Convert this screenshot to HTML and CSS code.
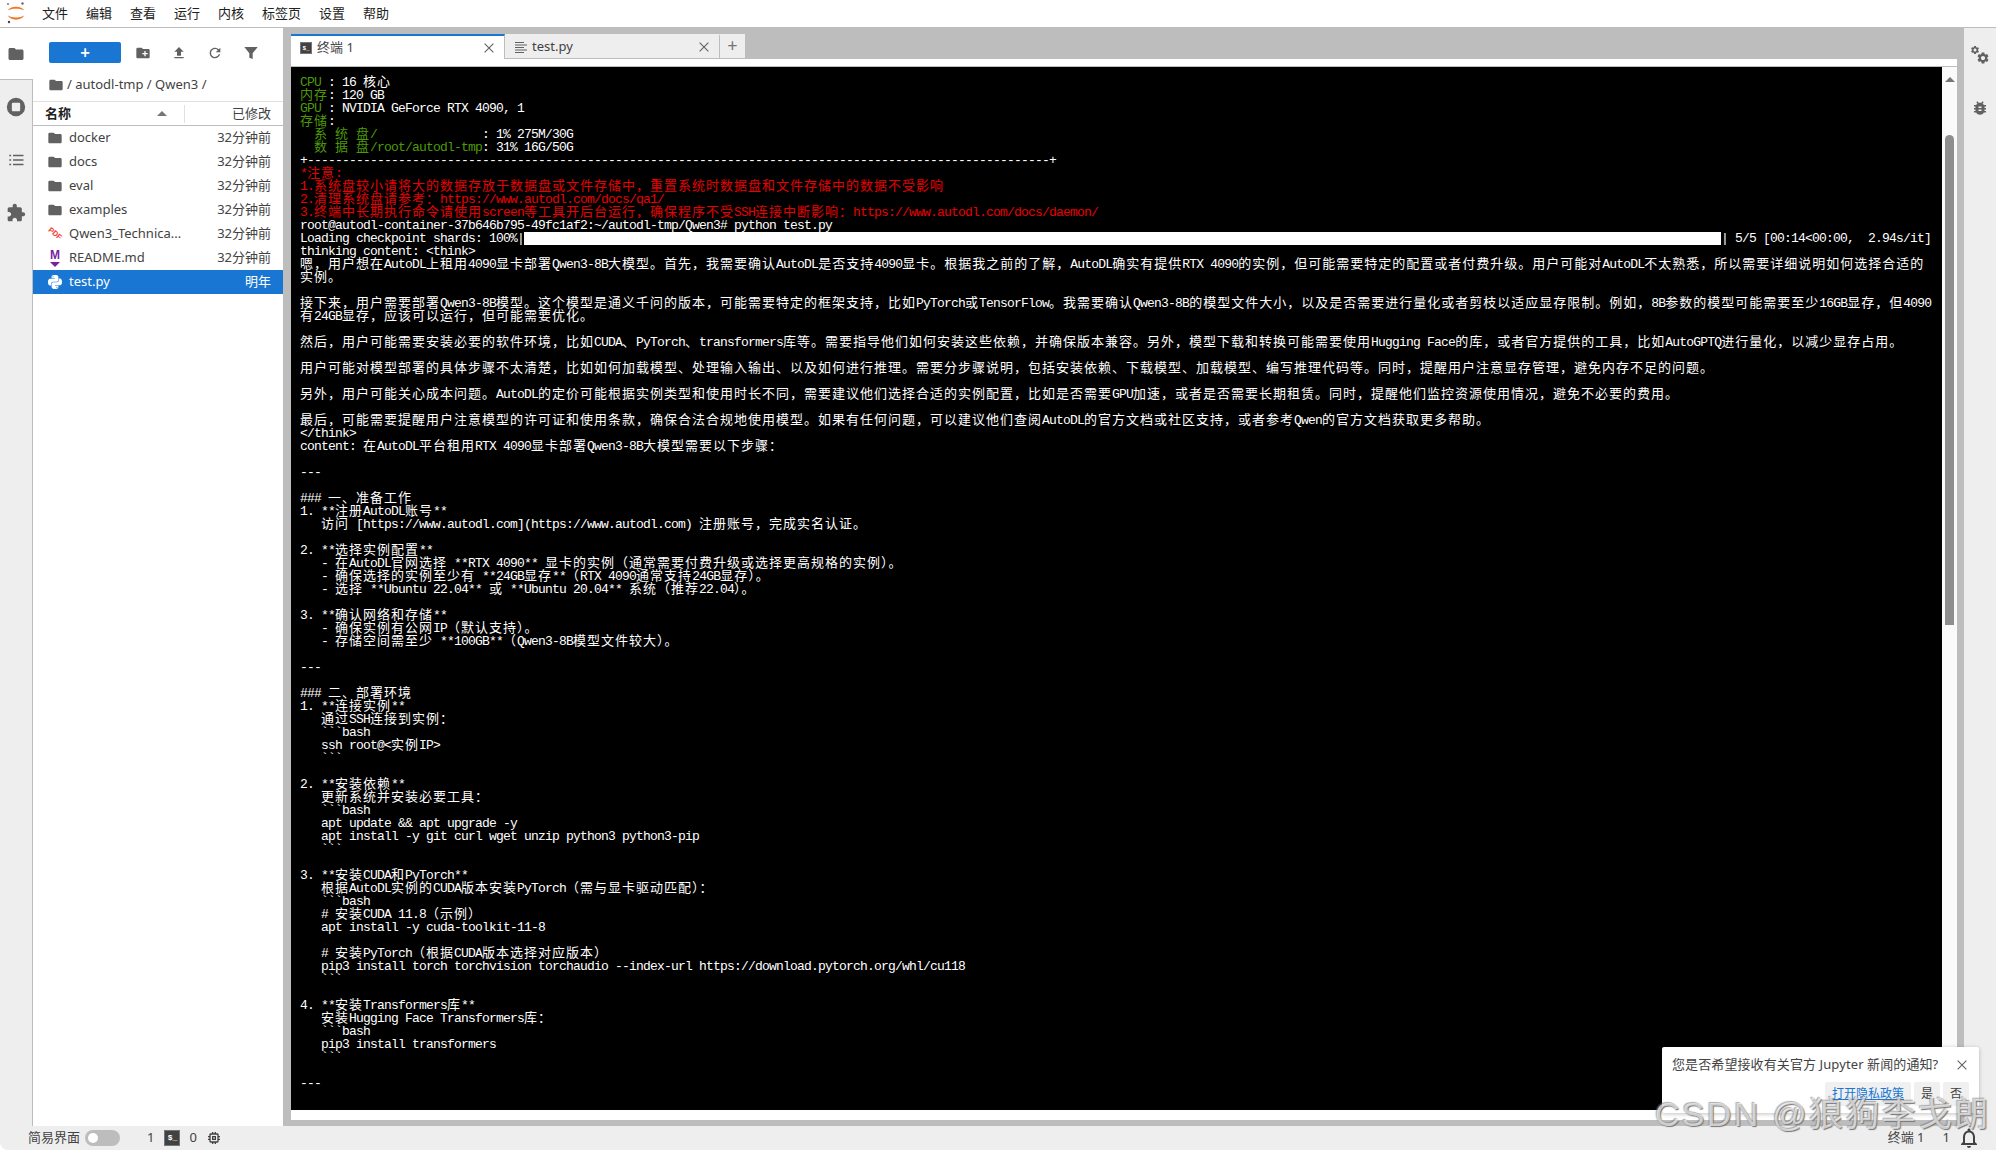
FILE: index.html
```html
<!DOCTYPE html>
<html lang="zh">
<head>
<meta charset="utf-8">
<title>JupyterLab</title>
<link rel="stylesheet" href="styles.css">
</head>
<body>
<svg class="defs" width="0" height="0" aria-hidden="true">
  <symbol id="i-folder" viewBox="0 0 24 24"><path d="M10 4H4c-1.1 0-2 .9-2 2v12c0 1.1.9 2 2 2h16c1.1 0 2-.9 2-2V8c0-1.1-.9-2-2-2h-8l-2-2z"/></symbol>
  <symbol id="i-cog" viewBox="0 0 24 24"><path d="M19.14 12.94c.04-.3.06-.61.06-.94 0-.32-.02-.64-.07-.94l2.03-1.58a.49.49 0 00.12-.61l-1.92-3.32a.488.488 0 00-.59-.22l-2.39.96c-.5-.38-1.03-.7-1.62-.94l-.36-2.54a.484.484 0 00-.48-.41h-3.84c-.24 0-.43.17-.47.41l-.36 2.54c-.59.24-1.13.57-1.62.94l-2.39-.96c-.22-.08-.47 0-.59.22L2.74 8.87c-.12.21-.08.47.12.61l2.03 1.58c-.05.3-.09.63-.09.94s.02.64.07.94l-2.03 1.58a.49.49 0 00-.12.61l1.92 3.32c.12.22.37.29.59.22l2.39-.96c.5.38 1.03.7 1.62.94l.36 2.54c.05.24.24.41.48.41h3.84c.24 0 .44-.17.47-.41l.36-2.54c.59-.24 1.13-.56 1.62-.94l2.39.96c.22.08.47 0 .59-.22l1.92-3.32c.12-.22.07-.47-.12-.61l-2.01-1.58zM12 15.6c-1.98 0-3.6-1.62-3.6-3.6s1.62-3.6 3.6-3.6 3.6 1.62 3.6 3.6-1.62 3.6-3.6 3.6z"/></symbol>
  <symbol id="i-close" viewBox="0 0 16 16"><path d="M3 3l10 10M13 3L3 13" fill="none" stroke="currentColor" stroke-width="1.3"/></symbol>
</svg>

<header class="menubar">
  <svg class="logo" viewBox="0 0 24 27" width="24" height="27">
    <path d="M4 10.5C6 5.5 18 5.5 20 10.5C17 8 7 8 4 10.5z" fill="#f37726"/>
    <path d="M4 15.5C6 21 18 21 20 15.5C17 18 7 18 4 15.5z" fill="#f37726"/>
    <circle cx="18.5" cy="3.5" r="1.2" fill="#666"/><circle cx="4" cy="4" r="1" fill="#777"/><circle cx="5" cy="22" r="1.2" fill="#444"/>
  </svg>
  <nav class="menu"><span>文件</span><span>编辑</span><span>查看</span><span>运行</span><span>内核</span><span>标签页</span><span>设置</span><span>帮助</span></nav>
</header>

<main class="workspace">
  <aside class="sidebar">
    <div class="side-tab active"><svg class="ic-18 grey"><use href="#i-folder"/></svg></div>
    <div class="side-tab"><svg class="ic-20 grey" viewBox="0 0 24 24"><path fill-rule="evenodd" d="M12 1a11 11 0 100 22 11 11 0 000-22zM8.5 7h7c.8 0 1.5.7 1.5 1.5v7c0 .8-.7 1.5-1.5 1.5h-7c-.8 0-1.5-.7-1.5-1.5v-7C7 7.700 7.700 7 8.500 7z"/></svg></div>
    <div class="side-tab"><svg class="ic-18 grey" viewBox="0 0 24 24"><path d="M3 5h2.500v2H3zM8 5h14v2H8zM3 11h2.500v2H3zM8 11h14v2H8zM3 17h2.500v2H3zM8 17h14v2H8z"/></svg></div>
    <div class="side-tab"><svg class="ic-20 grey" viewBox="0 0 24 24"><path d="M20.500 11H19V7c0-1.100-.9-2-2-2h-4V3.500C13 2.120 11.880 1 10.500 1S8 2.120 8 3.500V5H4c-1.100 0-1.990.9-1.990 2v3.800H3.500c1.490 0 2.700 1.210 2.700 2.700s-1.210 2.700-2.700 2.700H2V20c0 1.100.9 2 2 2h3.800v-1.500c0-1.490 1.210-2.700 2.700-2.700 1.490 0 2.700 1.210 2.700 2.700V22H17c1.100 0 2-.9 2-2v-4h1.500c1.380 0 2.500-1.120 2.500-2.500S21.880 11 20.500 11z"/></svg></div>
  </aside>

  <section class="files">
    <div class="file-tools">
      <button class="new-btn">+</button>
      <span class="tool"><svg class="ic-16 grey" viewBox="0 0 24 24"><path fill-rule="evenodd" d="M20 6h-8l-2-2H4c-1.100 0-2 .9-2 2v12c0 1.100.9 2 2 2h16c1.100 0 2-.9 2-2V8c0-1.100-.9-2-2-2zm-1 8h-3v3h-2v-3h-3v-2h3V9h2v3h3v2z"/></svg></span>
      <span class="tool"><svg class="ic-16 grey" viewBox="0 0 24 24"><path d="M9 16h6v-6h4l-7-7-7 7h4zm-4 2h14v2H5z"/></svg></span>
      <span class="tool"><svg class="ic-16 grey" viewBox="0 0 24 24"><path d="M17.650 6.350A7.958 7.958 0 0012 4c-4.420 0-7.990 3.580-7.990 8s3.570 8 7.990 8c3.730 0 6.840-2.550 7.730-6h-2.080A5.990 5.990 0 0112 18c-3.310 0-6-2.690-6-6s2.690-6 6-6c1.660 0 3.140.69 4.220 1.780L13 11h7V4l-2.350 2.350z"/></svg></span>
      <span class="tool"><svg class="ic-16 grey" viewBox="0 0 24 24"><path d="M2 3h20l-7.500 9.500V21l-5-2v-6.500z"/></svg></span>
    </div>
    <div class="crumbs"><svg class="ic-16 grey"><use href="#i-folder"/></svg><span>/ autodl-tmp / Qwen3 /</span></div>
    <div class="file-head">
      <b class="head-name">名称</b><i class="sort-arrow"></i><span class="head-mod">已修改</span>
    </div>
    <div class="file-row"><svg class="ic-16 grey"><use href="#i-folder"/></svg><span class="fname">docker</span><span class="fmod">32分钟前</span></div>
    <div class="file-row"><svg class="ic-16 grey"><use href="#i-folder"/></svg><span class="fname">docs</span><span class="fmod">32分钟前</span></div>
    <div class="file-row"><svg class="ic-16 grey"><use href="#i-folder"/></svg><span class="fname">eval</span><span class="fmod">32分钟前</span></div>
    <div class="file-row"><svg class="ic-16 grey"><use href="#i-folder"/></svg><span class="fname">examples</span><span class="fmod">32分钟前</span></div>
    <div class="file-row"><span class="pdf-ic">PDF</span><span class="fname">Qwen3_Technica...</span><span class="fmod">32分钟前</span></div>
    <div class="file-row"><span class="md-ic">M</span><span class="fname">README.md</span><span class="fmod">32分钟前</span></div>
    <div class="file-row selected">
      <svg class="ic-16 white" viewBox="0 0 24 24"><path d="M11.900 1.500c-5.300 0-5 2.300-5 2.300v2.400H12v.8H4.900S1.500 6.600 1.500 12s3 5.200 3 5.200h1.800v-2.500s-.1-3 3-3h5s2.800 0 2.800-2.700V4.400s.4-2.900-5.200-2.900zM9.100 3.200a.9.9 0 110 1.800.9.9 0 010-1.800z"/><path transform="rotate(180 12 12)" d="M11.900 1.500c-5.300 0-5 2.300-5 2.300v2.400H12v.8H4.900S1.500 6.600 1.500 12s3 5.200 3 5.200h1.800v-2.500s-.1-3 3-3h5s2.800 0 2.800-2.700V4.400s.4-2.900-5.200-2.900zM9.100 3.200a.9.9 0 110 1.800.9.9 0 010-1.800z"/></svg>
      <span class="fname">test.py</span><span class="fmod">明年</span>
    </div>
  </section>

  <section class="dock">
    <div class="tabbar">
      <div class="tab current"><span class="term-ic small">$_</span><span class="tab-label">终端 1</span><svg class="ic-close"><use href="#i-close"/></svg></div>
      <div class="tab"><svg class="ic-12 grey" viewBox="0 0 12 12"><path d="M0 1h9v1H0zM0 3.500h12v1H0zM0 6h9v1H0zM0 8.500h12v1H0zM0 11h9v1H0z"/></svg><span class="tab-label">test.py</span><svg class="ic-close"><use href="#i-close"/></svg></div>
      <div class="tab-add">+</div>
    </div>
    <div class="panel">
      <div class="panel-body">
        <div class="terminal" id="terminal">
<div class="l"><span class="g">CPU</span> : 16 核心</div>
<div class="l"><span class="g">内存</span>: 120 GB</div>
<div class="l"><span class="g">GPU</span> : NVIDIA GeForce RTX 4090, 1</div>
<div class="l"><span class="g">存储</span>:</div>
<div class="l"><span class="g">  系 统 盘/</span>               : 1% 275M/30G</div>
<div class="l"><span class="g">  数 据 盘/root/autodl-tmp</span>: 31% 16G/50G</div>
<div class="l">+----------------------------------------------------------------------------------------------------------+</div>
<div class="l r">*注意:</div>
<div class="l r">1.系统盘较小请将大的数据存放于数据盘或文件存储中，重置系统时数据盘和文件存储中的数据不受影响</div>
<div class="l r">2.清理系统盘请参考：https://www.autodl.com/docs/qa1/</div>
<div class="l r">3.终端中长期执行命令请使用screen等工具开后台运行，确保程序不受SSH连接中断影响：https://www.autodl.com/docs/daemon/</div>
<div class="l">root@autodl-container-37b646b795-49fc1af2:~/autodl-tmp/Qwen3# python test.py</div>
<div class="l">Loading checkpoint shards: 100%|<span class="bar"></span>| 5/5 [00:14&lt;00:00,  2.94s/it]</div>
<div class="l">thinking content: &lt;think&gt;</div>
<div class="l">嗯，用户想在AutoDL上租用4090显卡部署Qwen3-8B大模型。首先，我需要确认AutoDL是否支持4090显卡。根据我之前的了解，AutoDL确实有提供RTX 4090的实例，但可能需要特定的配置或者付费升级。用户可能对AutoDL不太熟悉，所以需要详细说明如何选择合适的</div>
<div class="l">实例。</div>
<div class="l"></div>
<div class="l">接下来，用户需要部署Qwen3-8B模型。这个模型是通义千问的版本，可能需要特定的框架支持，比如PyTorch或TensorFlow。我需要确认Qwen3-8B的模型文件大小，以及是否需要进行量化或者剪枝以适应显存限制。例如，8B参数的模型可能需要至少16GB显存，但4090</div>
<div class="l">有24GB显存，应该可以运行，但可能需要优化。</div>
<div class="l"></div>
<div class="l">然后，用户可能需要安装必要的软件环境，比如CUDA、PyTorch、transformers库等。需要指导他们如何安装这些依赖，并确保版本兼容。另外，模型下载和转换可能需要使用Hugging Face的库，或者官方提供的工具，比如AutoGPTQ进行量化，以减少显存占用。</div>
<div class="l"></div>
<div class="l">用户可能对模型部署的具体步骤不太清楚，比如如何加载模型、处理输入输出、以及如何进行推理。需要分步骤说明，包括安装依赖、下载模型、加载模型、编写推理代码等。同时，提醒用户注意显存管理，避免内存不足的问题。</div>
<div class="l"></div>
<div class="l">另外，用户可能关心成本问题。AutoDL的定价可能根据实例类型和使用时长不同，需要建议他们选择合适的实例配置，比如是否需要GPU加速，或者是否需要长期租赁。同时，提醒他们监控资源使用情况，避免不必要的费用。</div>
<div class="l"></div>
<div class="l">最后，可能需要提醒用户注意模型的许可证和使用条款，确保合法合规地使用模型。如果有任何问题，可以建议他们查阅AutoDL的官方文档或社区支持，或者参考Qwen的官方文档获取更多帮助。</div>
<div class="l">&lt;/think&gt;</div>
<div class="l">content: 在AutoDL平台租用RTX 4090显卡部署Qwen3-8B大模型需要以下步骤：</div>
<div class="l"></div>
<div class="l">---</div>
<div class="l"></div>
<div class="l">### 一、准备工作</div>
<div class="l">1. **注册AutoDL账号**</div>
<div class="l">   访问 [https://www.autodl.com](https://www.autodl.com) 注册账号，完成实名认证。</div>
<div class="l"></div>
<div class="l">2. **选择实例配置**</div>
<div class="l">   - 在AutoDL官网选择 **RTX 4090** 显卡的实例（通常需要付费升级或选择更高规格的实例）。</div>
<div class="l">   - 确保选择的实例至少有 **24GB显存**（RTX 4090通常支持24GB显存）。</div>
<div class="l">   - 选择 **Ubuntu 22.04** 或 **Ubuntu 20.04** 系统（推荐22.04）。</div>
<div class="l"></div>
<div class="l">3. **确认网络和存储**</div>
<div class="l">   - 确保实例有公网IP（默认支持）。</div>
<div class="l">   - 存储空间需至少 **100GB**（Qwen3-8B模型文件较大）。</div>
<div class="l"></div>
<div class="l">---</div>
<div class="l"></div>
<div class="l">### 二、部署环境</div>
<div class="l">1. **连接实例**</div>
<div class="l">   通过SSH连接到实例：</div>
<div class="l">   ```bash</div>
<div class="l">   ssh root@&lt;实例IP&gt;</div>
<div class="l">   ```</div>
<div class="l"></div>
<div class="l">2. **安装依赖**</div>
<div class="l">   更新系统并安装必要工具：</div>
<div class="l">   ```bash</div>
<div class="l">   apt update &amp;&amp; apt upgrade -y</div>
<div class="l">   apt install -y git curl wget unzip python3 python3-pip</div>
<div class="l">   ```</div>
<div class="l"></div>
<div class="l">3. **安装CUDA和PyTorch**</div>
<div class="l">   根据AutoDL实例的CUDA版本安装PyTorch（需与显卡驱动匹配）：</div>
<div class="l">   ```bash</div>
<div class="l">   # 安装CUDA 11.8（示例）</div>
<div class="l">   apt install -y cuda-toolkit-11-8</div>
<div class="l"></div>
<div class="l">   # 安装PyTorch（根据CUDA版本选择对应版本）</div>
<div class="l">   pip3 install torch torchvision torchaudio --index-url https://download.pytorch.org/whl/cu118</div>
<div class="l">   ```</div>
<div class="l"></div>
<div class="l">4. **安装Transformers库**</div>
<div class="l">   安装Hugging Face Transformers库：</div>
<div class="l">   ```bash</div>
<div class="l">   pip3 install transformers</div>
<div class="l">   ```</div>
<div class="l"></div>
<div class="l">---</div>
        </div>
        <div class="scrollbar"><i class="scroll-up"></i><i class="scroll-thumb"></i></div>
      </div>
    </div>
  </section>

  <aside class="rightbar">
    <div class="right-tab"><svg class="gears" viewBox="0 0 20 20" width="20" height="20"><use href="#i-cog" x="0" y="0" width="10" height="10"/><use href="#i-cog" x="6" y="6" width="14" height="14"/></svg></div>
    <div class="right-tab"><svg class="ic-18 grey" viewBox="0 0 24 24"><path d="M20 8h-2.810c-.45-.78-1.070-1.450-1.820-1.960L17 4.410 15.590 3l-2.170 2.170C12.960 5.060 12.490 5 12 5c-.49 0-.96.06-1.410.17L8.410 3 7 4.410l1.620 1.630C7.880 6.550 7.260 7.220 6.810 8H4v2h2.090c-.05.33-.09.66-.09 1v1H4v2h2v1c0 .34.04.67.09 1H4v2h2.810c1.040 1.790 2.970 3 5.190 3s4.150-1.210 5.190-3H20v-2h-2.090c.05-.33.09-.66.09-1v-1h2v-2h-2v-1c0-.34-.04-.67-.09-1H20V8zm-6 8h-4v-2h4v2zm0-4h-4v-2h4v2z"/></svg></div>
  </aside>
</main>

<footer class="statusbar">
  <span class="st-label">简易界面</span>
  <span class="toggle"><i></i></span>
  <span class="st-num first">1</span>
  <span class="term-ic">$_</span>
  <span class="st-num">0</span>
  <svg class="ic-16 dark" viewBox="0 0 24 24"><path d="M15 9H9v6h6V9zm-2 4h-2v-2h2v2zm8-2V9h-2V7c0-1.100-.9-2-2-2h-2V3h-2v2h-2V3H9v2H7c-1.100 0-2 .9-2 2v2H3v2h2v2H3v2h2v2c0 1.100.9 2 2 2h2v2h2v-2h2v2h2v-2h2c1.100 0 2-.9 2-2v-2h2v-2h-2v-2h2zm-4 6H7V7h10v10z"/></svg>
  <span class="st-right">终端 1</span>
  <span class="st-count">1</span>
  <svg class="ic-bell dark" viewBox="0 0 24 24"><path d="M12 22c1.100 0 2-.9 2-2h-4c0 1.100.9 2 2 2zm6-6v-5c0-3.070-1.630-5.640-4.500-6.320V4c0-.83-.67-1.500-1.500-1.500s-1.500.67-1.500 1.500v.68C7.640 5.360 6 7.920 6 11v5l-2 2v1h16v-1l-2-2zm-2 1H8v-6c0-2.480 1.510-4.500 4-4.500s4 2.020 4 4.500v6z"/></svg>
</footer>

<div class="toast">
  <div class="toast-top"><span>您是否希望接收有关官方 Jupyter 新闻的通知?</span><svg class="ic-close"><use href="#i-close"/></svg></div>
  <div class="toast-actions"><a class="t-btn link">打开隐私政策</a><a class="t-btn">是</a><a class="t-btn">否</a></div>
</div>
<div class="watermark">CSDN @狼狗李戈朗</div>
<script src="terminal.js"></script>
</body>
</html>
```

FILE: styles.css
```css
* { box-sizing: border-box; }
html, body { margin: 0; height: 100%; }
body {
  position: relative;
  width: 1996px;
  height: 1150px;
  overflow: hidden;
  display: flex;
  flex-direction: column;
  background: #fff;
  color: #424242;
  font: 13px/1.2 "Noto Sans", "Noto Sans CJK SC", sans-serif;
}
.defs { position: absolute; }
svg { display: block; flex: none; }
.grey { fill: #616161; }
.dark { fill: #424242; }
.white { fill: #fff; }
.ic-12 { width: 12px; height: 12px; }
.ic-16 { width: 16px; height: 16px; }
.ic-18 { width: 18px; height: 18px; }
.ic-20 { width: 20px; height: 20px; }
.ic-close { width: 14px; height: 14px; color: #616161; }

.menubar {
  flex: none;
  height: 28px;
  display: flex;
  align-items: center;
  padding-left: 4px;
  background: #fff;
  border-bottom: 1px solid #bdbdbd;
}
.menu { display: flex; gap: 18px; margin-left: 14px; color: #212121; }

.workspace { flex: 1; min-height: 0; display: flex; background: #bdbdbd; }

.sidebar { position: relative; flex: none; width: 33px; background: #eee; }
.side-tab {
  height: 53px;
  display: flex;
  align-items: center;
  justify-content: center;
  border-right: 1px solid #bdbdbd;
  padding-right: 1px;
}
.side-tab.active { height: 52px; background: #fff; border-right: 0; border-bottom: 1px solid #bdbdbd; }
.sidebar::after {
  content: "";
  position: absolute;
  top: 211px;
  bottom: 0;
  right: 0;
  width: 1px;
  background: #bdbdbd;
}

.files { flex: none; width: 250px; background: #fff; }
.file-tools { display: flex; align-items: center; padding: 14px 0 0 16px; height: 35px; }
.new-btn {
  width: 72px;
  height: 21px;
  margin-right: 4px;
  padding: 0;
  border: 0;
  border-radius: 2px;
  background: #1976d2;
  color: #fff;
  font: 600 17px/21px "Noto Sans", sans-serif;
}
.tool { width: 36px; display: flex; justify-content: center; }
.crumbs { display: flex; align-items: center; gap: 3px; height: 38px; padding-left: 15px; padding-top: 5px; }
.file-head {
  height: 25px;
  display: flex;
  align-items: center;
  padding: 0 12px;
  border-top: 1px solid #e0e0e0;
  border-bottom: 1px solid #bdbdbd;
  background: linear-gradient(#e0e0e0, #e0e0e0) 151px 3px / 1px 18px no-repeat #fff;
}
.head-name { font-weight: 700; color: #212121; }
.sort-arrow {
  margin-left: 86px;
  border: 5px solid transparent;
  border-top: 0;
  border-bottom: 5px solid #757575;
}
.head-mod { margin-left: auto; }
.file-row { height: 24px; display: flex; align-items: center; padding: 0 12px 0 14px; color: #424242; }
.fname { margin-left: 6px; color: #424242; font-size: 13px; }
.fmod { margin-left: auto; }
.file-row.selected { background: #1976d2; }
.file-row.selected .fname, .file-row.selected .fmod { color: #fff; }
.pdf-ic {
  width: 16px;
  text-align: center;
  font: 700 7.500px/1 "Liberation Sans", sans-serif;
  color: #f44336;
  transform: rotate(40deg);
}
.md-ic {
  width: 16px;
  height: 18px;
  padding-bottom: 5px;
  position: relative;
  text-align: center;
  font: 700 12px/13px "Liberation Sans", sans-serif;
  color: #7b1fa2;
}
.md-ic::after {
  content: "";
  position: absolute;
  left: 3px;
  bottom: 0;
  border: 5px solid transparent;
  border-bottom: 0;
  border-top: 5px solid #7b1fa2;
}

.dock {
  flex: 1;
  min-width: 0;
  display: flex;
  flex-direction: column;
  padding: 6px 7px 6px 8px;
}
.tabbar { flex: none; height: 25px; display: flex; }
.tab {
  width: 215px;
  display: flex;
  align-items: center;
  gap: 5px;
  padding: 0 8px 0 10px;
  background: #eee;
  border-top: 2px solid #eee;
  border-right: 1px solid #bdbdbd;
  border-bottom: 1px solid #bdbdbd;
}
.tab.current { width: 214px; background: #fff; border-top: 2px solid #1976d2; border-bottom: 0; color: #424242; padding: 0 8px 0 9px; }
.tab-label { flex: 1; }
.tab-add { width: 25px; background: #eee; border-bottom: 1px solid #bdbdbd; color: #757575; font-size: 18px; line-height: 23px; text-align: center; }
.term-ic {
  width: 16px;
  height: 16px;
  background: #424242;
  border: 1px solid #757575;
  color: #fff;
  font: 700 8px/14px "Liberation Mono", monospace;
  text-align: center;
}
.term-ic.small { width: 12px; height: 12px; font-size: 6px; line-height: 11px; }

.panel { flex: 1; min-height: 0; background: #fff; padding: 7px 0 10px; }
.panel-body { height: 100%; display: flex; border-top: 1px solid #bdbdbd; }
.terminal {
  flex: 1;
  min-width: 0;
  overflow: hidden;
  background: #000;
  color: #fff;
  padding: 9px 0 0 9px;
  font: 13px/13px "Liberation Mono", monospace;
  letter-spacing: -.801px;
}
.l { height: 13px; white-space: pre; line-height: 13px; }
.g { color: #4e9a06; }
.r { color: #e80000; }
.cjk { font-family: "Noto Sans CJK SC", sans-serif; letter-spacing: 1px; line-height: 0; }
.bar { display: inline-block; width: 1197px; height: 13px; background: #fff; vertical-align: top; }
.scrollbar { flex: none; width: 15px; background: #fafafa; display: flex; flex-direction: column; align-items: center; }
.scroll-up {
  margin-top: 10px;
  border: 5px solid transparent;
  border-top: 0;
  border-bottom: 5px solid #757575;
}
.scroll-thumb { width: 9px; height: 490px; margin-top: 53px; background: #8e8e8e; border-radius: 5px 5px 0 0; }

.rightbar { flex: none; width: 32px; background: #eee; }
.right-tab { height: 53px; display: flex; align-items: center; justify-content: center; }
.gears { fill: #616161; }

.statusbar {
  flex: none;
  height: 24px;
  display: flex;
  align-items: center;
  background: #eee;
  padding-left: 28px;
  border-bottom-left-radius: 8px;
}
.st-label { width: 52px; color: #424242; }
.toggle { width: 35px; height: 16px; margin-left: 5px; border-radius: 8px; background: #bdbdbd; padding: 3px; }
.toggle i { display: block; width: 10px; height: 10px; border-radius: 50%; background: #fff; }
.st-num { margin: 0 9px; color: #424242; }
.st-num.first { margin: 0 10px 0 27px; }
.st-right { margin-left: auto; }
.st-count { margin: 0 7px 0 18px; }
.ic-bell { width: 24px; height: 24px; margin-right: 15px; }

.toast {
  position: absolute;
  left: 1662px;
  top: 1047px;
  width: 317px;
  height: 66px;
  padding: 9px 10px 0;
  background: #fff;
  border-radius: 2px;
  box-shadow: 0 1px 4px rgba(0, 0, 0, .25);
  color: #424242;
}
.toast-top { display: flex; align-items: center; justify-content: space-between; height: 18px; letter-spacing: .1px; }
.toast-actions { display: flex; justify-content: flex-end; gap: 3px; margin-top: 8px; }
.t-btn { height: 24px; padding: 0 7px; background: #f0f0f0; border-radius: 2px; line-height: 24px; font-size: 12px; }
.t-btn.link { color: #1976d2; text-decoration: underline; }

.watermark {
  position: absolute;
  left: 1655px;
  top: 1094px;
  white-space: nowrap;
  font: 34px/40px "Liberation Sans", "Noto Sans CJK SC", sans-serif;
  letter-spacing: 2.300px;
  color: rgba(255, 255, 255, .65);
  text-shadow: 1px 1px 1px #777, -1px -1px 1px rgba(120, 120, 120, .6);
}
```

FILE: terminal.js
```js
// The terminal grid has double-width CJK cells: wrap each run so it gets 14px cells.
var root = document.getElementById('terminal');
var walker = document.createTreeWalker(root, NodeFilter.SHOW_TEXT);
var nodes = [];
while (walker.nextNode()) { nodes.push(walker.currentNode); }
nodes.forEach(function (node) {
  if (!node.parentNode.classList.contains('l') && !node.parentNode.classList.contains('g')) { return; }
  if (node.nodeValue.trim() === '') { return; }
  var frag = document.createDocumentFragment();
  node.nodeValue.split(/([\u2E80-\u9FFF\uFF00-\uFFEF\u3000-\u303F]+)/).forEach(function (part, i) {
    if (!part) { return; }
    if (i % 2) {
      var s = document.createElement('span');
      s.className = 'cjk';
      s.textContent = part;
      frag.appendChild(s);
    } else {
      frag.appendChild(document.createTextNode(part));
    }
  });
  node.parentNode.replaceChild(frag, node);
});
```
